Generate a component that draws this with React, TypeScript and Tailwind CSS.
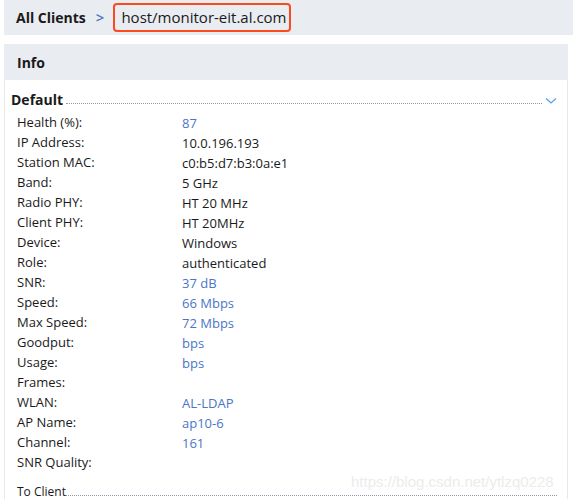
import React from 'react';

const rows: { label: string; value: string; link?: boolean }[] = [
  { label: 'Health (%):', value: '87', link: true },
  { label: 'IP Address:', value: '10.0.196.193' },
  { label: 'Station MAC:', value: 'c0:b5:d7:b3:0a:e1' },
  { label: 'Band:', value: '5 GHz' },
  { label: 'Radio PHY:', value: 'HT 20 MHz' },
  { label: 'Client PHY:', value: 'HT 20MHz' },
  { label: 'Device:', value: 'Windows' },
  { label: 'Role:', value: 'authenticated' },
  { label: 'SNR:', value: '37 dB', link: true },
  { label: 'Speed:', value: '66 Mbps', link: true },
  { label: 'Max Speed:', value: '72 Mbps', link: true },
  { label: 'Goodput:', value: 'bps', link: true },
  { label: 'Usage:', value: 'bps', link: true },
  { label: 'Frames:', value: '' },
  { label: 'WLAN:', value: 'AL-LDAP', link: true },
  { label: 'AP Name:', value: 'ap10-6', link: true },
  { label: 'Channel:', value: '161', link: true },
  { label: 'SNR Quality:', value: '' },
];

export default function App() {
  return (
    <div
      className="relative h-[499px] w-[573px] overflow-hidden bg-white pl-[4px] text-[#1a1a1a]"
      style={{ fontFamily: '"Open Sans", "Noto Sans", sans-serif' }}
    >
      {/* breadcrumb bar */}
      <div className="flex h-[35px] items-center bg-[#e9ecf1] pl-[12px]">
        <span className="text-[14px] font-bold">All Clients</span>
        <span className="ml-[10px] text-[15px] font-semibold text-[#4a76c8]">&gt;</span>
        <span className="ml-[9px] flex h-[29px] w-[178px] items-center rounded-[4px] border-2 border-[#fd4a1c] pl-[6px] text-[15px]">
          host/monitor-eit.al.com
        </span>
      </div>

      {/* info card */}
      <div className="mt-[9px] mr-[5px] border-x border-[#e6e8ec]">
        <div className="-mx-px flex h-[36px] items-center bg-[#e9ecf1] pl-[13px] text-[14px] font-bold">
          Info
        </div>

        <div className="flex items-center pt-[11px] pl-[6px] pr-[10px]">
          <span className="text-[14px] font-bold leading-[18px]">Default</span>
          <span className="mx-[3px] mt-[6px] flex-1 border-b border-dotted border-[#8b98ad]" />
          <svg width="12" height="8" viewBox="0 0 12 8" className="mt-[2px]">
            <path d="M1 1.5 L6 6 L11 1.5" fill="none" stroke="#5aa0e8" strokeWidth="1.3" />
          </svg>
        </div>

        <div className="pt-[3px] pl-[12px] text-[13px]">
          {rows.map((r) => (
            <div key={r.label} className="flex h-[20px] items-center leading-[20px]">
              <span className="w-[165px]">{r.label}</span>
              <span className={`mt-[2px] ${r.link ? 'text-[#4a76c8]' : ''}`}>{r.value}</span>
            </div>
          ))}
        </div>

        <div className="mt-[12px] flex items-end pl-[12px] pr-[10px]">
          <span className="text-[12px] leading-[16px]">To Client</span>
          <span className="mb-[4px] flex-1 border-b border-dotted border-[#8b98ad]" />
        </div>
      </div>

      <span
        className="absolute top-[471px] left-[351px] text-[15px] text-[#ececec]"
        style={{ fontFamily: '"Liberation Sans", Arial, sans-serif' }}
      >
        https://blog.csdn.net/ytlzq0228
      </span>
    </div>
  );
}
